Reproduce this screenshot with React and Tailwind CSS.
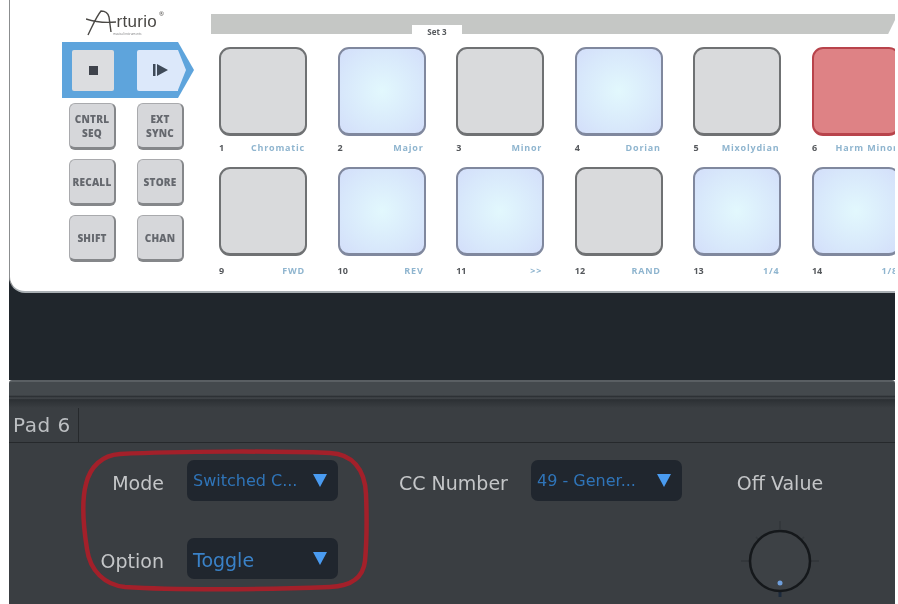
const TOP_PADS = [
  { num: '1', label: 'Chromatic', kind: 'off' },
  { num: '2', label: 'Major', kind: 'lit' },
  { num: '3', label: 'Minor', kind: 'off' },
  { num: '4', label: 'Dorian', kind: 'lit' },
  { num: '5', label: 'Mixolydian', kind: 'off' },
  { num: '6', label: 'Harm Minor', kind: 'red' },
];
const BOTTOM_PADS = [
  { num: '9', label: 'FWD', kind: 'off' },
  { num: '10', label: 'REV', kind: 'lit' },
  { num: '11', label: '>>', kind: 'lit' },
  { num: '12', label: 'RAND', kind: 'off' },
  { num: '13', label: '1/4', kind: 'lit' },
  { num: '14', label: '1/8', kind: 'lit' },
];
const SIDE_BUTTONS = [
  ['CNTRL', 'SEQ'], ['EXT', 'SYNC'], ['RECALL'], ['STORE'], ['SHIFT'], ['CHAN'],
];

function Pad({ pad, low }) {
  const face = {
    off: 'border-[#6f7173] bg-[#d9dadc]',
    lit: 'border-[#80889e] bg-[radial-gradient(circle,#e2f8fd_0%,#d8e8fb_65%,#d3defa_100%)]',
    red: 'border-[#b8434b] bg-[#de8285]',
  }[pad.kind];
  return (
    <div className="w-[88px] shrink-0">
      <div className={`h-[89px] rounded-[11px] border-2 border-b-[3px] ${face}`} />
      <div className={`${low ? 'mt-[7px]' : 'mt-[4px]'} flex h-[16px] items-center justify-between pr-[2px] text-[9px] font-bold whitespace-nowrap`}>
        <span className="text-[#55585c]">{pad.num}</span>
        <span className="tracking-[0.8px] text-[#8fb5cf]">{pad.label}</span>
      </div>
    </div>
  );
}

function SideButton({ lines }) {
  return (
    <div className="flex h-[47px] w-[47px] flex-col items-center justify-center rounded-[6px] border border-r-2 border-b-[3px] border-[#a9aaad] border-r-[#85878a] border-b-[#85878a] bg-[#d6d7da] text-[10px] leading-[14px] font-extrabold tracking-[0.2px] text-[#65686e]">
      {lines.map(line => <span key={line}>{line}</span>)}
    </div>
  );
}

function Select({ value, small }) {
  return (
    <div className="flex h-[41px] w-[151px] items-center justify-between rounded-[7px] bg-[#20262e] pr-[10px] pl-[6px]">
      <span className={small ? 'text-[16px] text-[#2f74b8]' : "pt-[4px] font-['DejaVu_Sans',sans-serif] text-[19px] text-[#3a82c8]"}>{value}</span>
      <svg width="16" height="15" viewBox="0 0 16 15"><path d="M1 1h14L8 14z" fill="#4a9bf0" /></svg>
    </div>
  );
}

function Knob() {
  return (
    <svg width="78" height="76" viewBox="0 0 78 76" className="block">
      <g stroke="#32363a" strokeWidth="1.5">
        <path d="M39 0v8M8 40H0M70 40h8M15 16l5 5M63 16l-5 5" />
      </g>
      <path d="M39 70v6" stroke="#1c2a3c" strokeWidth="3" />
      <circle cx="39" cy="40" r="30" fill="#3d4145" stroke="#15181b" strokeWidth="2.5" />
      <circle cx="39" cy="62" r="2.5" fill="#6f9fdc" />
    </svg>
  );
}

function Logo() {
  return (
    <div className="relative flex h-[26px] w-[71px] items-start justify-end">
      <svg width="32" height="26" viewBox="0 0 32 26" className="absolute top-0 left-0" fill="none" stroke="#4a4845" strokeWidth="1.4">
        <path d="M0 9c9 3 20 4 30 3M2 25C6 17 10 7 15 1c4 0 7 2 8 6l2 15" />
      </svg>
      <span className="mt-[3px] font-['Liberation_Sans',sans-serif] text-[17px] leading-none tracking-[0.3px] text-[#4a4845]">rturio</span>
      <span className="absolute top-[1px] -right-[7px] text-[6px] leading-none text-[#4a4845]">®</span>
      <span className="absolute top-[23px] left-[27px] text-[3px] leading-none whitespace-nowrap text-[#77787a]">musical instruments</span>
    </div>
  );
}

export default function App() {
  return (
    <div className="relative h-[604px] w-[898px] overflow-hidden bg-white pr-[3px] pl-[9px] font-['Open_Sans',sans-serif] blur-[0.6px]">
      {/* controller */}
      <div className="relative flex h-[293px] overflow-hidden bg-[#20262c]">
        <div className="flex h-full w-full rounded-bl-[16px] border-b-2 border-l border-b-[#aab0b4] border-l-[#8b8d8f] bg-white">
          <div className="flex w-[201px] shrink-0 flex-col">
            <div className="flex h-[42px] items-center pt-[3px] pl-[76px]">
              <Logo />
            </div>
            <div className="ml-[52px] flex h-[56px] w-[132px]">
              <div className="flex h-full w-[116px] items-center justify-between bg-[#5ea4dc] pl-[10px]">
                <div className="flex h-[41px] w-[42px] items-center justify-center rounded-[2px] bg-[#dcdde0]">
                  <div className="h-[9px] w-[9px] bg-[#3f434c]" />
                </div>
                <div className="flex h-[41px] w-[41px] items-center justify-end rounded-l-[2px] bg-[#dce8fa] pr-[10px]">
                  <svg width="15" height="12" viewBox="0 0 15 12"><path d="M0 0h2.5v12H0zM4 0l11 6-11 6z" fill="#3f4a58" /></svg>
                </div>
              </div>
              <svg width="16" height="56" viewBox="0 0 16 56" className="shrink-0">
                <path d="M0 0l16 28L0 56z" fill="#5ea4dc" />
                <path d="M0 8l8 20L0 48z" fill="#dce8fa" />
              </svg>
            </div>
            <div className="mt-[5px] ml-[59px] grid w-[115px] grid-cols-[47px_47px] gap-x-[21px] gap-y-[9px]">
              {SIDE_BUTTONS.map(lines => <SideButton key={lines[0]} lines={lines} />)}
            </div>
          </div>
          <div className="min-w-0 flex-1">
            <div className="relative mt-[14px] h-[20px] bg-[#c5c7c5] [clip-path:polygon(0_0,100%_0,100%_30%,99%_100%,0_100%)]" />
            <div className="mt-[13px] ml-[8px] flex gap-[30.6px]">
              {TOP_PADS.map(pad => <Pad key={pad.num} pad={pad} />)}
            </div>
            <div className="mt-[11px] ml-[8px] flex gap-[30.6px]">
              {BOTTOM_PADS.map(pad => <Pad key={pad.num} pad={pad} low />)}
            </div>
          </div>
        </div>
        <div className="absolute top-[25px] left-[403px] flex h-[14px] w-[50px] items-center justify-center rounded-b-[3px] bg-white text-[8px] font-bold text-[#55585c]">Set 3</div>
      </div>

      {/* editor */}
      <div className="h-[87px] bg-[#20262c]" />
      <div className="h-[28px] rounded-t-[3px] border-t-2 border-[#5a5f63] bg-[linear-gradient(#44494d_0%,#44494d_50%,#2c3034_56%,#44484c_62%,#2c3034_68%,#3a3e42_100%)]" />
      <div className="h-[196px] bg-[#3a3e42] font-['DejaVu_Sans',sans-serif] text-[19px] text-[#c4c6c8]">
        <div className="flex h-[35px] border-b border-[#26292c]">
          <div className="flex w-[70px] items-center border-r border-[#26292c] pl-[4px] text-[20px] tracking-[0.5px] text-[#bcbfc2]">Pad 6</div>
        </div>
        <div className="flex items-start pt-[17px]">
          <div className="grid w-[329px] shrink-0 grid-cols-[155px_151px] gap-x-[23px] gap-y-[37px]">
            <span className="flex items-center justify-end pt-[5px]">Mode</span>
            <Select value="Switched C..." small />
            <span className="flex items-center justify-end pt-[5px]">Option</span>
            <Select value="Toggle" />
          </div>
          <span className="ml-[61px] flex h-[41px] w-[110px] shrink-0 items-center pt-[5px] whitespace-nowrap">CC Number</span>
          <div className="ml-[22px] shrink-0"><Select value="49 - Gener..." small /></div>
          <div className="ml-[19px] flex w-[158px] shrink-0 flex-col items-center">
            <span className="flex h-[41px] items-center pt-[5px] whitespace-nowrap">Off Value</span>
            <div className="mt-[20px]"><Knob /></div>
          </div>
        </div>
      </div>

      {/* red marker loop around Mode and Option */}
      <svg width="290" height="145" viewBox="0 0 290 145" className="absolute top-[449px] left-[80px]" fill="none">
        <path d="M40 5C100 2 200 2 250 4c22 1 35 16 36 41 1 25 1 45-1 67-2 18-15 25-35 26-70 3-160 3-205 0C25 136 10 122 7 100 3 75 2 50 6 35 10 18 22 6 40 5z" stroke="#a3202a" strokeWidth="4.5" />
      </svg>
    </div>
  );
}
